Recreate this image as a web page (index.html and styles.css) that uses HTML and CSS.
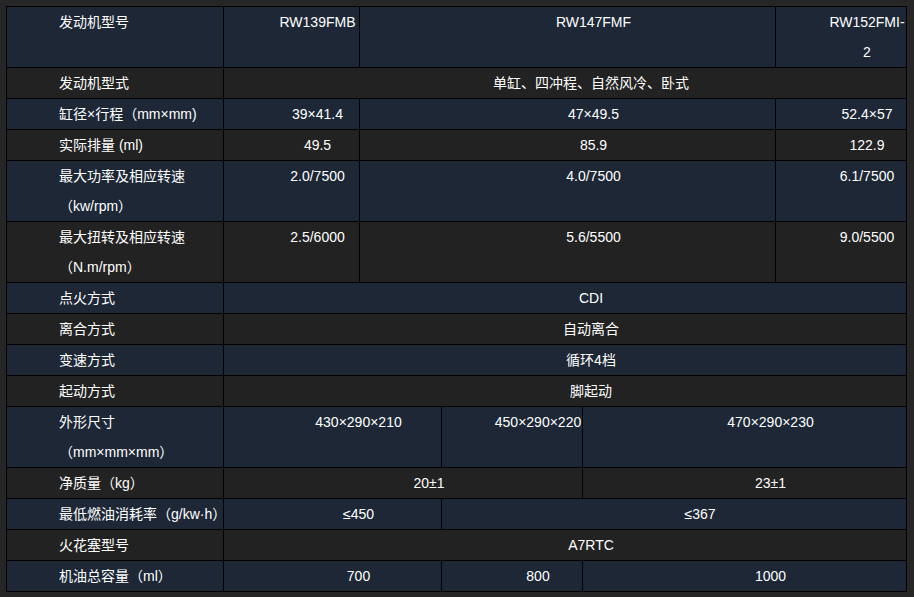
FILE: index.html
```html
<!DOCTYPE html>
<html lang="zh-CN">
<head>
<meta charset="utf-8">
<title>发动机参数</title>
<link rel="stylesheet" href="styles.css">
</head>
<body>
<table class="spec">
  <colgroup>
    <col class="c1"><col class="c2"><col class="c3"><col class="c4"><col class="c5"><col class="c6">
  </colgroup>
  <tbody>
    <tr class="blue"><td class="label">发动机型号</td><td>RW139FMB</td><td colspan="3">RW147FMF</td><td>RW152FMI-2</td></tr>
    <tr class="grey"><td class="label">发动机型式</td><td colspan="5">单缸、四冲程、自然风冷、卧式</td></tr>
    <tr class="blue"><td class="label">缸径×行程（mm×mm)</td><td>39×41.4</td><td colspan="3">47×49.5</td><td>52.4×57</td></tr>
    <tr class="grey"><td class="label">实际排量 (ml)</td><td>49.5</td><td colspan="3">85.9</td><td>122.9</td></tr>
    <tr class="blue"><td class="label">最大功率及相应转速<br>（kw/rpm）</td><td>2.0/7500</td><td colspan="3">4.0/7500</td><td>6.1/7500</td></tr>
    <tr class="grey"><td class="label">最大扭转及相应转速<br>（N.m/rpm）</td><td>2.5/6000</td><td colspan="3">5.6/5500</td><td>9.0/5500</td></tr>
    <tr class="blue"><td class="label">点火方式</td><td colspan="5">CDI</td></tr>
    <tr class="grey"><td class="label">离合方式</td><td colspan="5">自动离合</td></tr>
    <tr class="blue"><td class="label">变速方式</td><td colspan="5">循环4档</td></tr>
    <tr class="grey"><td class="label">起动方式</td><td colspan="5">脚起动</td></tr>
    <tr class="blue"><td class="label">外形尺寸<br>（mm×mm×mm）</td><td colspan="2">430×290×210</td><td>450×290×220</td><td colspan="2">470×290×230</td></tr>
    <tr class="grey"><td class="label">净质量（kg）</td><td colspan="3">20±1</td><td colspan="2">23±1</td></tr>
    <tr class="blue"><td class="label">最低燃油消耗率（g/kw·h）</td><td colspan="2">≤450</td><td colspan="3">≤367</td></tr>
    <tr class="grey"><td class="label">火花塞型号</td><td colspan="5">A7RTC</td></tr>
    <tr class="blue"><td class="label">机油总容量（ml）</td><td colspan="2">700</td><td>800</td><td colspan="2">1000</td></tr>
  </tbody>
</table>
</body>
</html>
```
FILE: styles.css
```css
html, body {
  margin: 0;
  background: #262626;
}
body {
  padding: 6px;
  font-family: "Liberation Sans", "Noto Sans CJK SC", sans-serif;
  font-size: 14px;
  color: #ffffff;
}
.spec {
  width: 900px;
  table-layout: fixed;
  border-collapse: collapse;
  border: 1px solid #000;
}
.c1 { width: 217px; }
.c2 { width: 136px; }
.c3 { width: 82px; }
.c4 { width: 141px; }
.c5 { width: 193px; }
.c6 { width: 131px; }
.spec td {
  border: 1px solid #000;
  padding: 0 0 0 52px;
  line-height: 30px;
  vertical-align: top;
  text-align: center;
  word-break: normal;
}
.spec td.label {
  text-align: left;
}
.blue { background: #1d2736; }
.grey { background: #222222; }
```
